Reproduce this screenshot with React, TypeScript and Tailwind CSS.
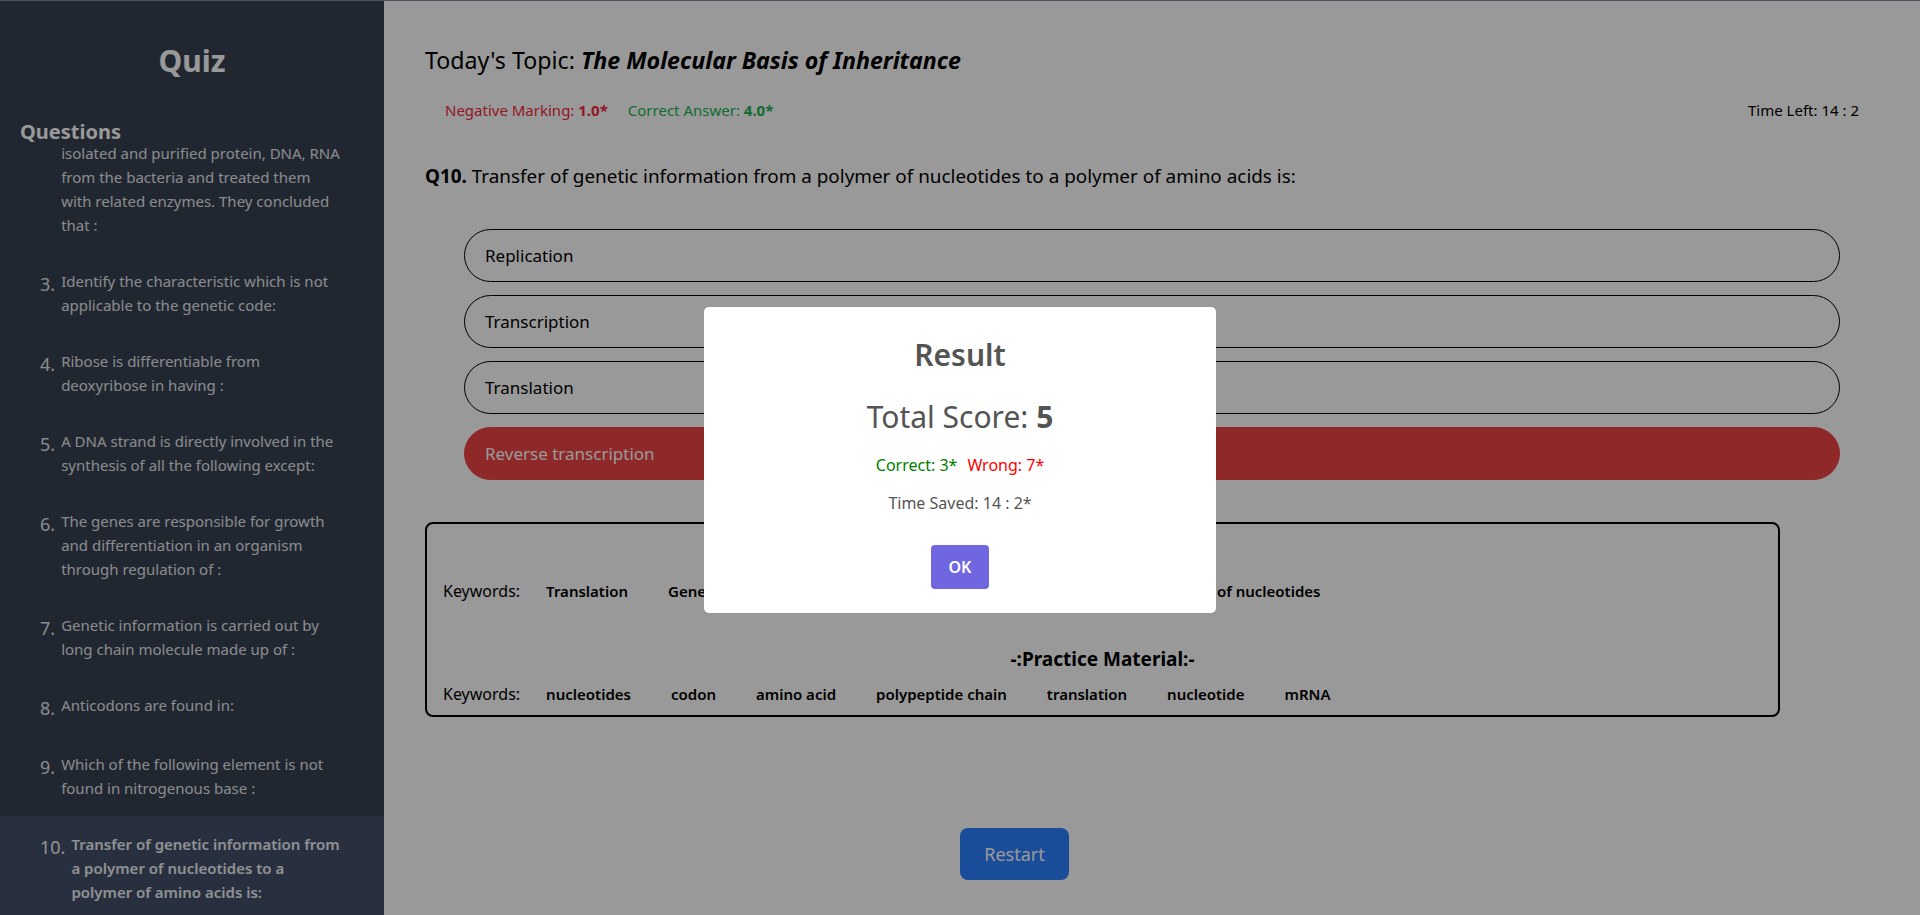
import { useEffect, useRef } from "react";

const QUESTIONS = [
  "Which one of the following is the correct statement regarding the Griffith's experiment?",
  "In 1944, Avery, MacLeod and McCarty isolated and purified protein, DNA, RNA from the bacteria and treated them with related enzymes. They concluded that :",
  "Identify the characteristic which is not applicable to the genetic code:",
  "Ribose is differentiable from deoxyribose in having :",
  "A DNA strand is directly involved in the synthesis of all the following except:",
  "The genes are responsible for growth and differentiation in an organism through regulation of :",
  "Genetic information is carried out by long chain molecule made up of :",
  "Anticodons are found in:",
  "Which of the following element is not found in nitrogenous base :",
  "Transfer of genetic information from a polymer of nucleotides to a polymer of amino acids is:",
];

const OPTIONS = ["Replication", "Transcription", "Translation", "Reverse transcription"];

const QUESTION_KEYWORDS = ["Translation", "Genetic information", "mRNA", "polymer of amino acids", "polymer of nucleotides"];
const PRACTICE_KEYWORDS = ["nucleotides", "codon", "amino acid", "polypeptide chain", "translation", "nucleotide", "mRNA"];

function KeywordRow({ words }: { words: string[] }) {
  return (
    <div className="flex items-center pl-4 leading-6">
      <span className="mr-[6px] text-base">Keywords:</span>
      {words.map((w) => (
        <span key={w} className="mx-5 text-[15px] font-semibold">
          {w}
        </span>
      ))}
    </div>
  );
}

function Sidebar() {
  const listRef = useRef<HTMLDivElement>(null);
  const secondRef = useRef<HTMLLIElement>(null);

  useEffect(() => {
    // keep the list scrolled the way the screenshot had it
    if (listRef.current && secondRef.current) {
      listRef.current.scrollTop = secondRef.current.offsetTop + 16 + 24 + 3;
    }
  }, []);

  return (
    <aside className="flex h-full w-96 shrink-0 flex-col bg-[#374151] text-white">
      <h1 className="pt-[40px] text-center text-[30px] font-bold leading-[40px]">Quiz</h1>
      <h2 className="mt-[39px] px-5 text-xl font-bold leading-6">Questions</h2>
      <div ref={listRef} className="relative flex-1 overflow-hidden">
        <ol className="pb-4">
          {QUESTIONS.map((q, i) => {
            const active = i === QUESTIONS.length - 1;
            return (
              <li
                key={i}
                ref={i === 1 ? secondRef : undefined}
                className={`flex gap-[6px] py-4 pl-10 pr-[42px] text-[15px] leading-6 ${
                  active ? "bg-[#445069] font-semibold text-[#eef0f4]" : "text-[#e5e7eb]"
                }`}
              >
                <span className="shrink-0 pt-[3px] text-lg font-normal leading-6">{i + 1}.</span>
                <span>{q}</span>
              </li>
            );
          })}
        </ol>
      </div>
    </aside>
  );
}

function ResultModal() {
  return (
    <div className="fixed inset-0 flex items-center justify-center bg-black/40 pt-[5px]">
      <div className="flex w-[512px] flex-col items-center rounded-[5px] bg-white pb-6 pt-[28px] text-[#545454]">
        <h2 className="text-[30px] font-semibold leading-[40px]">Result</h2>
        <div className="mt-[20px] text-[30px] leading-[44px]">
          Total Score: <b>5</b>
        </div>
        <div className="mt-[14px] flex gap-[10px] text-base leading-6">
          <span className="text-[#008000]">Correct: 3*</span>
          <span className="text-[#ff0000]">Wrong: 7*</span>
        </div>
        <div className="mt-[14px] text-base leading-6">Time Saved: 14 : 2*</div>
        <button className="mt-[30px] h-[44px] w-[58px] rounded-[4px] bg-[#7066e0] text-base font-semibold text-white">
          OK
        </button>
      </div>
    </div>
  );
}

export default function App() {
  return (
    <div className="flex h-screen w-full overflow-hidden border-t border-[#828a98] font-['Noto_Sans',sans-serif]">
      <Sidebar />
      <main className="h-full flex-1 bg-white px-[41px] pt-[43px] text-black">
        <h1 className="text-[23.2px] leading-8">
          Today's Topic: <b><i>The Molecular Basis of Inheritance</i></b>
        </h1>
        <div className="mt-[22px] flex justify-between px-5 text-[15px] leading-6">
          <div className="flex gap-5">
            <span className="text-[#f3283c]">
              Negative Marking: <b>1.0*</b>
            </span>
            <span className="text-[#20b552]">
              Correct Answer: <b>4.0*</b>
            </span>
          </div>
          <span>Time Left: 14 : 2</span>
        </div>
        <p className="mt-10 text-[18.9px] leading-7">
          <b>Q10.</b> Transfer of genetic information from a polymer of nucleotides to a polymer of amino acids is:
        </p>
        <div className="mx-[39px] mt-[39px] flex flex-col gap-[13px]">
          {OPTIONS.map((o, i) => (
            <div
              key={o}
              className={`flex h-[53px] items-center rounded-full border px-5 text-[17px] ${
                i === 3 ? "border-[#ef4444] bg-[#ef4444] text-white" : "border-black"
              }`}
            >
              {o}
            </div>
          ))}
        </div>
        <div className="mt-[42px] w-[1355px] rounded-lg border-2 border-black pb-[9px] pt-5">
          <h3 className="text-center text-[19px] font-bold leading-6">-:Question Material:-</h3>
          <div className="mt-[11px]">
            <KeywordRow words={QUESTION_KEYWORDS} />
          </div>
          <h3 className="mt-[44px] text-center text-[19px] font-bold leading-6">-:Practice Material:-</h3>
          <div className="mt-[11px]">
            <KeywordRow words={PRACTICE_KEYWORDS} />
          </div>
        </div>
        <button className="ml-[535px] mt-[111px] h-[52px] w-[109px] rounded-lg bg-[#2b7fff] text-lg text-white">
          Restart
        </button>
      </main>
      <ResultModal />
    </div>
  );
}
